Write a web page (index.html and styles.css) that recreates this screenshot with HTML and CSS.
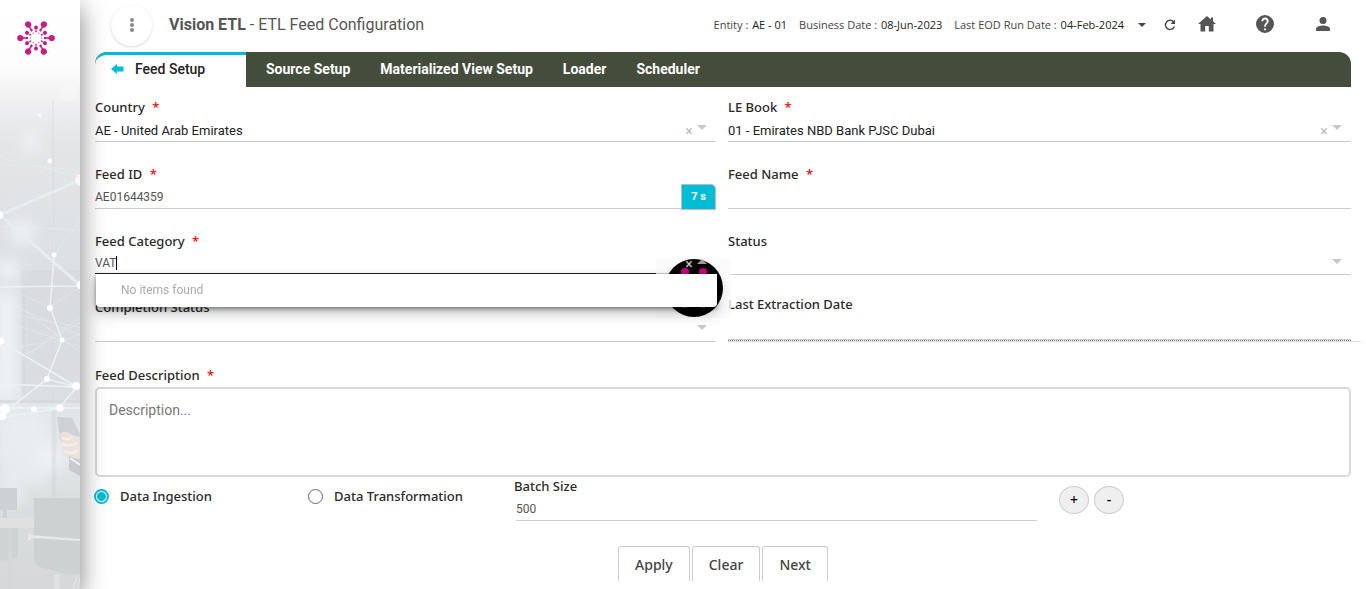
FILE: index.html
```html
<!DOCTYPE html>
<html lang="en">
<head>
<meta charset="utf-8">
<title>Vision ETL - ETL Feed Configuration</title>
<link rel="stylesheet" href="styles.css">
</head>
<body>
<div class="app">
  <aside class="sidebar">
    <svg class="scene" viewBox="0 0 80 589" preserveAspectRatio="xMidYMin slice" aria-hidden="true">
      <defs>
        <linearGradient id="sky" x1="0" y1="0" x2="0" y2="1">
          <stop offset="0" stop-color="#fff"/>
          <stop offset=".11" stop-color="#fdfdfd"/>
          <stop offset=".17" stop-color="#f0f0f1"/>
          <stop offset=".24" stop-color="#e3e5e7"/>
          <stop offset=".5" stop-color="#dcdfe1"/>
          <stop offset=".62" stop-color="#dee2e4"/>
          <stop offset=".75" stop-color="#e3e7e9"/>
          <stop offset=".88" stop-color="#d9dcdd"/>
          <stop offset="1" stop-color="#d6d8d9"/>
        </linearGradient>
        <filter id="soft" x="-50%" y="-50%" width="200%" height="200%"><feGaussianBlur stdDeviation="7"/></filter>
        <filter id="slight"><feGaussianBlur stdDeviation="1"/></filter>
      </defs>
      <rect width="80" height="589" fill="url(#sky)"/>
      <g fill="#eff2f4" filter="url(#soft)">
        <circle cx="30" cy="142" r="10"/><circle cx="22" cy="232" r="12"/><circle cx="8" cy="270" r="12"/>
        <rect x="-5" y="290" width="22" height="110"/><circle cx="50" cy="458" r="14"/><circle cx="12" cy="496" r="10"/>
        <rect x="0" y="410" width="48" height="75" opacity=".6"/>
      </g>
      <circle cx="69" cy="93" r="9" fill="#fff" opacity=".25"/>
      <g fill="#cdd0d2" opacity=".5">
        <path d="M21 270h59v130H21z" opacity=".4"/><path d="M23 290h2v108h-2z"/><path d="M0 400h80v3H0z"/>
        <path d="M52 100h2v310h-2z" opacity=".4"/><path d="M52 411h4v88h-4z" opacity=".8" filter="url(#slight)"/>
      </g>
      <g>
        <path d="M0 488h17v22H0zM3 510h4v8H3z" fill="#ccd1d3"/>
        <path d="M0 518h34v10H0z" fill="#dfe1e0"/>
        <path d="M0 528h18v28q-6 6-18 4z" fill="#d0d3d4"/><path d="M8 528h4v61H8z" fill="#d4d7d8"/>
        <path d="M34 498h46v75q-8 3-18 0l-22-6q-6-3-6-10z" fill="#cdd1d2"/>
        <path d="M28 534v6h3v-2l49 3v-2l-49-4z" fill="#e6e8e9"/>
        <path d="M55 575h4v14h-4zM73 589l4-13M77 589l3-11" fill="#dfe1e2" stroke="#e2e4e4"/>
      </g>
      <g>
        <path d="M57 417l15 1 8 16v28l-7 4-13-28z" fill="#cfd2d4"/>
        <path d="M60 434q3-3 7-2l6 3 7 2v22l-8-1q-9-3-9-7l-1-10z" fill="#eae0dc"/>
        <path d="M62 438q6 3 10-1M62 444q8 3 15-1M64 451q8 4 14-1" stroke="#f3ece9" stroke-width="3" fill="none"/>
        <path d="M69 456l11 5v15l-11-6z" fill="#c6cbcf"/><path d="M70 458l10 7" stroke="#f1f1f1" stroke-width="2"/>
      </g>
      <g fill="none" stroke="#e9f0f2" opacity=".65" stroke-width=".7">
        <path d="M28 97l12 18 10 46 4 94-2 38M0 150l80 30M0 158l80 18M0 164l80 6M0 215l50-54M54 255l26-34M0 226l80 4M0 300l80 35M0 312l80 15M0 320l80 27M0 292l80 60M0 370l80-48M0 378l50-40 30-20M50 307l30-20M0 348l62-7 18-7M0 140l80-16M50 307l-50-22M3 410l45-30"/>
      </g>
      <g fill="none" stroke="#eaf3f6" stroke-width="2.4">
        <path d="M0 215l80-35M0 215l80 70" stroke="#e5edf0" stroke-width="3"/>
        <path d="M0 287l80-1M0 341l77 46-77-3M0 409l60-2 17-20M4 413l43-34 15-39-12-33 4-51M47 379l30 8M4 408h76M0 418l60-10h20" stroke-width="1.5"/>
      </g>
      <g fill="#fff">
        <circle cx="40" cy="115" r="2" opacity=".6"/><circle cx="50" cy="161" r="2.5" opacity=".8"/><circle cx="81" cy="180" r="6" opacity=".7"/>
        <circle cx="-1" cy="215" r="4"/><circle cx="54" cy="255" r="2.5"/><circle cx="81" cy="285" r="4"/><circle cx="50" cy="308" r="3"/>
        <circle cx="0" cy="341" r="4"/><circle cx="62" cy="340" r="2.5"/><circle cx="47" cy="379" r="3"/><circle cx="76" cy="386" r="4"/>
        <circle cx="5" cy="409" r="5"/><circle cx="2" cy="416" r="4"/><circle cx="34" cy="409" r="3"/><circle cx="60" cy="408" r="3.5"/>
      </g>
    </svg>
    <svg class="logo" viewBox="-20 -18 40 36" aria-label="Vision">
      <defs>
        <g id="arm"><circle cx="15.7" r="3.1"/><path d="M14-1L8-.4v.8l6 .6z"/><circle cx="9.200" r="1.300"/><circle cx="5.500" r=".6"/></g>
        <g id="bud"><circle cx="10.400" r="2"/><path d="M10-.5L7-.2v.4l3 .3z"/><circle cx="6.600" r=".9"/></g>
      </defs>
      <g fill="#c71c80">
        <use href="#arm"/><use href="#arm" transform="rotate(60)"/><use href="#arm" transform="rotate(120)"/><use href="#arm" transform="rotate(180)"/><use href="#arm" transform="rotate(240)"/><use href="#arm" transform="rotate(300)"/>
        <use href="#bud" transform="rotate(30)"/><use href="#bud" transform="rotate(90)"/><use href="#bud" transform="rotate(150)"/><use href="#bud" transform="rotate(210)"/><use href="#bud" transform="rotate(270)"/><use href="#bud" transform="rotate(330)"/>
      </g>
    </svg>
  </aside>

  <main class="main">
    <header class="header">
      <button class="menu" type="button" aria-label="Menu">
        <svg width="6" height="16" viewBox="0 0 6 16" fill="#888"><circle cx="3" cy="3" r="2"/><circle cx="3" cy="8" r="2"/><circle cx="3" cy="13" r="2"/></svg>
      </button>
      <h1 class="title"><b>Vision ETL</b> - ETL Feed Configuration</h1>
      <div class="facts">
        <span>Entity : <b>AE - 01</b></span>
        <span>Business Date : <b>08-Jun-2023</b></span>
        <span>Last EOD Run Date : <b>04-Feb-2024</b></span>
      </div>
      <div class="tools">
        <button type="button" aria-label="More dates"><svg width="8" height="4" viewBox="0 0 8 4"><path d="M0 0h8L4 4z"/></svg></button>
        <button type="button" aria-label="Refresh"><svg width="12" height="12" viewBox="0 0 12 12"><path d="M9.600 3A4.600 4.600 0 1 0 10.400 7.400" fill="none" stroke="#444" stroke-width="1.400"/><path d="M11 .5V5H6.500z"/></svg></button>
      </div>
      <nav class="icons">
        <a href="#home" aria-label="Home"><svg width="18" height="16" viewBox="0 0 18 16"><path d="M9 0L0 8h2.500v7.500h4.700V10h3.600v5.500h4.700V8H18l-3-2.700V1.500h-2.200v1.900z"/></svg></a>
        <a href="#help" aria-label="Help"><svg width="18" height="18" viewBox="2 2 20 20"><path d="M12 2a10 10 0 1 0 0 20 10 10 0 0 0 0-20zm1 17h-2v-2h2zm2.070-7.750l-.9.920C13.450 12.900 13 13.500 13 15h-2v-.5c0-1.100.45-2.100 1.170-2.830l1.240-1.260A2 2 0 1 0 10 9H8a4 4 0 1 1 7.070 2.250z"/></svg></a>
        <a href="#account" aria-label="Account"><svg width="14" height="14" viewBox="0 0 14 14"><circle cx="7" cy="3.500" r="3.500"/><path d="M0 14v-2.200C0 9.500 4.500 8.500 7 8.500s7 1 7 3.300V14z"/></svg></a>
      </nav>
    </header>

    <nav class="tabs">
      <a class="tab active" href="#feed"><svg width="13" height="10" viewBox="0 0 13 10" fill="#00bcd4"><path d="M0 5l6-5v2.500h6.500v5H6V10z"/></svg>Feed Setup</a>
      <a class="tab" href="#source">Source Setup</a>
      <a class="tab" href="#view">Materialized View Setup</a>
      <a class="tab" href="#loader">Loader</a>
      <a class="tab" href="#scheduler">Scheduler</a>
    </nav>

    <form class="form">
      <div class="grid">
        <div class="field">
          <label for="country">Country <i>*</i></label>
          <div class="control">
            <select id="country"><option>AE - United Arab Emirates</option></select>
            <button class="clear" type="button" aria-label="Clear country">×</button><span class="arrow"></span>
          </div>
        </div>
        <div class="field">
          <label for="book">LE Book <i>*</i></label>
          <div class="control">
            <select id="book"><option>01 - Emirates NBD Bank PJSC Dubai</option></select>
            <button class="clear" type="button" aria-label="Clear LE book">×</button><span class="arrow"></span>
          </div>
        </div>
        <div class="field">
          <label for="feedid">Feed ID <i>*</i></label>
          <div class="control">
            <input id="feedid" type="text" value="AE01644359">
            <span class="timer">7 s</span>
          </div>
        </div>
        <div class="field">
          <label for="feedname">Feed Name <i>*</i></label>
          <div class="control"><input id="feedname" type="text"></div>
        </div>
        <div class="field">
          <label for="category">Feed Category <i>*</i></label>
          <div class="control open">
            <div class="loader">
              <svg viewBox="-30 -30 60 60" width="60" height="60" aria-hidden="true"><circle r="29" fill="#000"/><g fill="#c4007f"><circle cx="-9" cy="-16" r="4"/><circle cx="9" cy="-16" r="4"/><circle cx="-9" cy="16" r="4"/><circle cx="9" cy="16" r="4"/><circle cx="-18" r="4"/><circle cx="18" r="4"/></g></svg>
            </div>
            <input id="category" class="typed" type="text" value="VAT"><span class="caret"></span>
            <span class="fill"></span>
            <button class="clear" type="button" aria-label="Clear category">×</button><span class="arrow up"></span>
            <div class="dropdown">No items found</div>
          </div>
        </div>
        <div class="field">
          <label for="status">Status</label>
          <div class="control short"><select id="status"></select><span class="arrow"></span></div>
        </div>
        <div class="field">
          <label for="completion">Completion Status</label>
          <div class="control"><select id="completion"></select><span class="arrow"></span></div>
        </div>
        <div class="field extraction">
          <label for="extraction">Last Extraction Date</label>
          <div class="date"><input id="extraction" type="text" disabled></div>
        </div>
      </div>

      <div class="field description">
        <label for="description">Feed Description <i>*</i></label>
        <textarea id="description" placeholder="Description..."></textarea>
      </div>

      <div class="options">
        <label class="radio"><input type="radio" name="mode" checked>Data Ingestion</label>
        <label class="radio"><input type="radio" name="mode">Data Transformation</label>
        <div class="batch">
          <label for="batch">Batch Size</label>
          <input id="batch" type="text" value="500">
        </div>
        <div class="steps">
          <button type="button">+</button>
          <button type="button">-</button>
        </div>
      </div>

      <div class="actions">
        <button type="button">Apply</button>
        <button type="button">Clear</button>
        <button type="button">Next</button>
      </div>
    </form>
  </main>
</div>
</body>
</html>
```
FILE: styles.css
```css
* { box-sizing: border-box; }
body { margin: 0; background: #fff; color: #222; font-family: Roboto, sans-serif; font-size: 13px; }
button, input, select, textarea { font: inherit; color: inherit; }
.app { display: flex; min-height: 100vh; }

.sidebar { position: relative; z-index: 1; flex: 0 0 80px; display: flex; justify-content: center; align-items: flex-start; padding: 20px 8px 0 0; box-shadow: 0 8px 24px rgba(0, 0, 0, .5); background: #fff; }
.scene { position: absolute; inset: 0; width: 100%; height: 100%; }
.logo { position: relative; width: 40px; height: 36px; }

.main { flex: 1; min-width: 0; padding: 0 15px 8px; }

.header { display: flex; align-items: center; height: 52px; padding: 0 19px 2px 16px; }
.menu { display: grid; place-items: center; width: 41px; height: 41px; padding: 0; border: 0; border-radius: 50%; background: #fff; box-shadow: 0 1px 3px rgba(0, 0, 0, .16); }
.title { flex: 1; margin: 0 0 2px 17px; font-size: 16px; font-weight: 400; color: #555; white-space: nowrap; }
.title b { font-weight: 700; }
.facts { display: flex; gap: 12px; padding-bottom: 2px; font-family: "Open Sans", sans-serif; font-size: 11px; color: #444; white-space: nowrap; }
.facts b { margin-left: 1px; font-weight: 500; color: #222; }
.tools { display: flex; align-items: center; gap: 18px; margin-left: 14px; }
.tools button { display: flex; padding: 0; border: 0; background: none; }
.tools svg { fill: #444; }
.icons { display: flex; align-items: center; gap: 40px; margin-left: 22px; padding-bottom: 2px; }
.icons a { display: flex; justify-content: center; width: 18px; }
.icons svg { fill: #555; }

.tabs { display: flex; gap: 30px; height: 35px; border-radius: 12px 12px 0 0; background: #444c3b; overflow: hidden; }
.tab { display: flex; align-items: center; padding-bottom: 2px; color: #fff; font-size: 14px; font-weight: 700; text-decoration: none; white-space: nowrap; }
.tab.active { gap: 11px; width: 151px; margin-right: -10px; padding: 0 0 4px 16px; border-top: 3px solid #00bcd4; border-radius: 12px 0 0 0; background: #fff; color: #222; font-weight: 500; }

.form { padding-top: 10px; }
.grid { display: grid; grid-template-columns: minmax(0, 621fr) minmax(0, 623fr); gap: 22px 12px; }
label { font-family: "Noto Sans", sans-serif; font-size: 13px; font-weight: 500; line-height: 20px; color: #2a2a2a; }
label i { margin-left: 4px; color: #f00; font-style: normal; }
.field { display: flex; flex-direction: column; }
.control { position: relative; display: flex; height: 25px; border-bottom: 1px solid #ccc; }
.control.short { height: 24px; }
.control select, .control input { flex: 1; min-width: 0; padding: 2px 0 0; border: 0; outline: 0; appearance: none; background: none; font-size: 13px; }
.control input { color: #555; font-size: 12px; }
.clear { width: 10px; margin-right: 3px; padding: 3px 0 0; border: 0; background: none; color: #bbb; font-size: 14px; line-height: 20px; }
.arrow { width: 0; height: 0; margin: 8px 9px 0 0; border: 5px solid transparent; border-top-color: #c8c8c8; border-bottom: 0; }
.arrow.up { border-bottom: 5px solid #999; border-top: 0; }
.timer { position: absolute; right: 0; bottom: -2px; width: 35px; height: 26px; border: 1px solid #bbb; border-radius: 0 5px 0 0; background: #00bcd4; color: #fff; font-size: 11px; font-weight: 700; line-height: 23px; text-align: center; }

.control.open { z-index: 1; height: 23px; border-bottom-color: #222; }
.control.open .typed { flex: none; field-sizing: content; }
.caret { width: 1px; height: 14px; margin-top: 5px; background: #000; }
.fill { flex: 1; }
.open .clear, .open .arrow { position: relative; }
.open .clear { color: #ccc; }
.loader { position: absolute; top: 7px; right: -15px; display: grid; place-items: center; width: 75px; height: 60px; background: rgba(250, 250, 250, .8); }
.dropdown { position: absolute; top: 100%; left: 1px; width: 100%; height: 33px; margin-top: 1px; padding-left: 25px; border-radius: 0 0 4px 4px; background: #fff; box-shadow: 0 2px 4px rgba(0, 0, 0, .4), 0 6px 14px rgba(0, 0, 0, .25); color: #aaa; font-size: 12px; line-height: 33px; }

.extraction label { margin-top: -3px; }
.date { height: 28px; margin-right: -10px; padding-right: 10px; border-bottom: 1px solid #ddd; }
.date input { display: block; width: 100%; height: 27px; padding: 0; border: 0; border-bottom: 1px dotted #777; background: linear-gradient(#ccc, #ccc) left bottom / 100% 1px no-repeat; background-clip: padding-box; background-origin: padding-box; }

.description { margin-top: 23px; }
.description textarea { height: 90px; margin-top: 2px; padding: 12px; border: 2px solid #d9d9d9; border-radius: 5px; background: #fff; outline: 0; resize: none; font-size: 14px; line-height: 18px; }
.description textarea::placeholder { color: #777; }

.options { display: grid; grid-template-columns: 214px 205px 523px 1fr; height: 44px; }
.radio { display: flex; align-items: flex-start; gap: 11px; padding-top: 9px; white-space: nowrap; }
.radio input { width: 15px; height: 15px; margin: 3px 0 0 -1px; border: 1px solid #666; border-radius: 50%; appearance: none; background: #fff; }
.radio input:checked { border: 2px solid #00bcd4; background: radial-gradient(#00bcd4 4px, #fff 5px); }
.batch { display: flex; flex-direction: column; }
.batch label { line-height: 19px; }
.batch input { height: 25px; margin-left: 2px; padding: 2px 0 0; border: 0; border-bottom: 1px solid #ccc; outline: 0; background: none; color: #555; font-size: 12px; }
.steps { display: flex; gap: 5px; padding: 9px 0 0 22px; }
.steps button { width: 30px; height: 28px; padding: 0; border: 1px solid #ccc; border-radius: 50%; background: #efefef; color: #000; font-family: "Noto Sans", sans-serif; font-size: 14px; font-weight: 500; line-height: 20px; }

.actions { display: flex; justify-content: center; gap: 2px; margin-top: 25px; }
.actions button { height: 35px; padding: 0 16px; border: 1px solid #ccc; border-bottom: 0; border-radius: 3px 3px 0 0; background: #fff; color: #444; font-family: "Noto Sans", sans-serif; font-size: 14px; font-weight: 500; }
```
